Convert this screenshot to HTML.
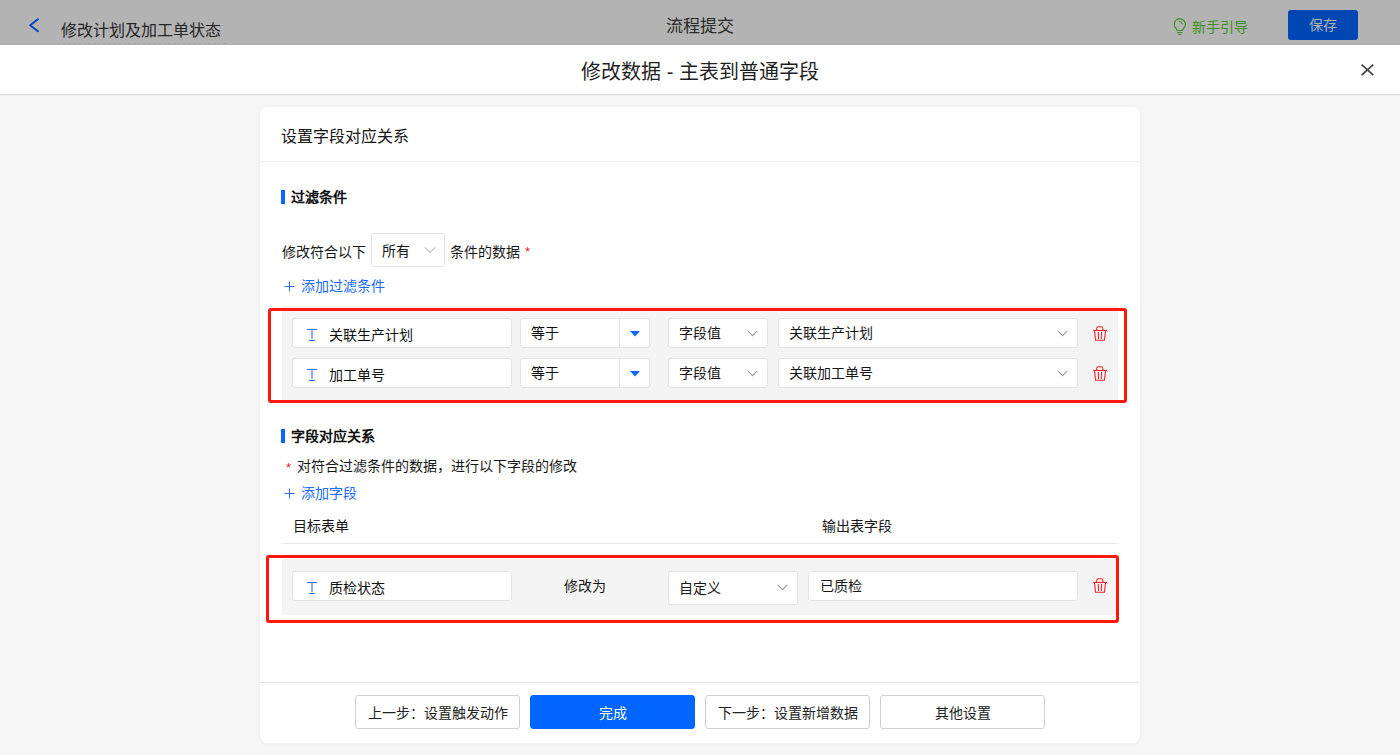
<!DOCTYPE html>
<html lang="zh-CN"><head><meta charset="utf-8">
<style>
*{box-sizing:border-box;margin:0;padding:0}
html,body{width:1400px;height:755px;overflow:hidden}
body{font-family:"Liberation Sans",sans-serif;background:#f5f5f5;position:relative;color:#333}
.a{position:absolute;white-space:nowrap}
.t14{font-size:14px;line-height:20px}
#topbar{left:0;top:0;width:1400px;height:45px;background:#b3b3b3;border-bottom:1px solid #aeaeae}
#mhead{left:0;top:45px;width:1400px;height:50px;background:#fff;border-bottom:1px solid #dedede;box-shadow:0 1px 0 #efefef}
#card{left:260px;top:107px;width:880px;height:636px;background:#fff;border-radius:8px;box-shadow:0 1px 4px rgba(0,0,0,0.035)}
.box{position:absolute;background:#fff;border:1px solid #e3e3e3;border-radius:3px}
.gray{position:absolute;background:#f4f4f4}
.red{position:absolute;border:3px solid #ff170a;border-radius:3px}
.blue{color:#1a6bff}
.bar{position:absolute;width:4px;height:14px;background:#0a66ff}
.btn{position:absolute;top:695px;height:34px;border:1px solid #d0d0d0;border-radius:3px;background:#fff;font-size:14px;line-height:34px;text-align:center;color:#222}
</style></head><body>
<div id="topbar" class="a"></div>
<!-- back arrow -->
<svg class="a" style="left:26px;top:15px" width="16" height="20" viewBox="0 0 16 20"><path d="M11.9 4.3 L4.2 10.3 L11.9 16.2" fill="none" stroke="#0046b8" stroke-width="2" stroke-linecap="round" stroke-linejoin="round"/></svg>
<div class="a" style="left:61px;top:20px;font-size:16px;line-height:22px;color:#262626">修改计划及加工单状态</div>
<div class="a" style="left:58px;top:43px;width:168px;border-top:1px dashed #a3a3a3"></div>
<div class="a" style="left:666px;top:16px;font-size:17px;line-height:22px;color:#2a2a2a">流程提交</div>
<!-- bulb -->
<svg class="a" style="left:1170px;top:16px" width="20" height="22" viewBox="0 0 20 22"><g fill="none" stroke="#3d9020" stroke-width="1.15" stroke-linecap="round"><path d="M7.1 14.5 L6 12.3 A5.6 5.6 0 1 1 13.6 12.3 L12.5 14.5 Z" stroke-linejoin="round"/><path d="M9.5 5.3 C10.7 5.6 11.7 6.5 12.3 7.9"/><path d="M7.6 16.5 H12 M8.6 18.5 H11"/></g></svg>
<div class="a t14" style="left:1192px;top:17px;color:#3d9020">新手引导</div>
<div class="a" style="left:1288px;top:10px;width:70px;height:30px;background:#0047b3;border-radius:3px;color:#b3b3b3;font-size:14px;line-height:30px;text-align:center">保存</div>

<div id="mhead" class="a"></div>
<div class="a" style="left:0;top:60px;width:1400px;text-align:center;font-size:20px;line-height:24px;color:#1f1f1f">修改数据 - 主表到普通字段</div>
<svg class="a" style="left:1358px;top:60px" width="19" height="19" viewBox="0 0 19 19"><path d="M3.6 4.6 L15.3 15.1 M15.3 4.6 L3.6 15.1" stroke="#404040" stroke-width="1.6"/></svg>

<div id="card" class="a"></div>
<div class="a" style="left:281px;top:126px;font-size:16px;line-height:22px;color:#161616">设置字段对应关系</div>
<div class="a" style="left:260px;top:161px;width:880px;height:1px;background:#ececec"></div>

<div class="bar" style="left:281px;top:190px"></div>
<div class="a t14" style="left:291px;top:187px;font-weight:bold;color:#0e0e0e">过滤条件</div>

<div class="a t14" style="left:282px;top:242px;color:#161616">修改符合以下</div>
<div class="box" style="left:371px;top:233px;width:74px;height:34px"></div>
<div class="a t14" style="left:382px;top:241px;color:#161616">所有</div>
<svg class="a" style="left:424px;top:246px" width="12" height="8" viewBox="0 0 12 8"><path d="M1 1.5 L6 6.5 L11 1.5" fill="none" stroke="#999" stroke-width="1"/></svg>
<div class="a t14" style="left:450px;top:242px;color:#161616">条件的数据</div>
<div class="a" style="left:525px;top:245px;font-size:13px;line-height:14px;color:#f5222d">*</div>

<svg class="a" style="left:284px;top:281px" width="11" height="11" viewBox="0 0 11 11"><path d="M5.5 0.5 V10.5 M0.5 5.5 H10.5" stroke="#2f6dff" stroke-width="1"/></svg>
<div class="a t14 blue" style="left:301px;top:276px">添加过滤条件</div>

<!-- filter rows -->
<div class="gray" style="left:282px;top:306px;width:836px;height:94px"></div>

<div class="box" style="left:292px;top:318px;width:220px;height:30px"></div>
<div class="a t14" style="left:329px;top:325px;color:#0e0e0e">关联生产计划</div>
<div class="box" style="left:520px;top:318px;width:130px;height:30px"></div>
<div class="a" style="left:619px;top:319px;width:1px;height:28px;background:#e3e3e3"></div>
<div class="a t14" style="left:531px;top:323px;color:#0e0e0e">等于</div>
<div class="box" style="left:668px;top:318px;width:100px;height:30px"></div>
<div class="a t14" style="left:679px;top:323px;color:#161616">字段值</div>
<div class="box" style="left:778px;top:318px;width:300px;height:30px"></div>
<div class="a t14" style="left:789px;top:323px;color:#161616">关联生产计划</div>

<div class="box" style="left:292px;top:358px;width:220px;height:30px"></div>
<div class="a t14" style="left:329px;top:365px;color:#0e0e0e">加工单号</div>
<div class="box" style="left:520px;top:358px;width:130px;height:30px"></div>
<div class="a" style="left:619px;top:359px;width:1px;height:28px;background:#e3e3e3"></div>
<div class="a t14" style="left:531px;top:363px;color:#0e0e0e">等于</div>
<div class="box" style="left:668px;top:358px;width:100px;height:30px"></div>
<div class="a t14" style="left:679px;top:363px;color:#161616">字段值</div>
<div class="box" style="left:778px;top:358px;width:300px;height:30px"></div>
<div class="a t14" style="left:789px;top:363px;color:#161616">关联加工单号</div>

<div class="red" style="left:268px;top:308px;width:859px;height:95px"></div>

<!-- section 2 -->
<div class="bar" style="left:281px;top:429px"></div>
<div class="a t14" style="left:291px;top:426px;font-weight:bold;color:#0e0e0e">字段对应关系</div>
<div class="a" style="left:286px;top:461px;font-size:13px;line-height:14px;color:#f5222d">*</div>
<div class="a t14" style="left:297px;top:456px;color:#161616">对符合过滤条件的数据，进行以下字段的修改</div>
<svg class="a" style="left:284px;top:488px" width="11" height="11" viewBox="0 0 11 11"><path d="M5.5 0.5 V10.5 M0.5 5.5 H10.5" stroke="#2f6dff" stroke-width="1"/></svg>
<div class="a t14 blue" style="left:301px;top:483px">添加字段</div>

<div class="a t14" style="left:293px;top:516px;color:#161616">目标表单</div>
<div class="a t14" style="left:822px;top:516px;color:#161616">输出表字段</div>
<div class="a" style="left:282px;top:543px;width:836px;height:1px;background:#e8e8e8"></div>

<div class="gray" style="left:282px;top:559px;width:836px;height:56px"></div>
<div class="box" style="left:292px;top:571px;width:220px;height:30px"></div>
<div class="a t14" style="left:329px;top:578px;color:#0e0e0e">质检状态</div>
<div class="a t14" style="left:564px;top:576px;color:#161616">修改为</div>
<div class="box" style="left:668px;top:571px;width:130px;height:34px"></div>
<div class="a t14" style="left:679px;top:578px;color:#161616">自定义</div>
<div class="box" style="left:808px;top:571px;width:270px;height:30px"></div>
<div class="a t14" style="left:820px;top:576px;color:#161616">已质检</div>

<svg class="a" style="left:306px;top:328px" width="12" height="14" viewBox="0 0 12 14"><path d="M1 1.5 H11 M6 2 V11 M3 12.5 H9" fill="none" stroke="#2e6bff" stroke-width="1.1"/></svg>
<svg class="a" style="left:630px;top:331px" width="10" height="6" viewBox="0 0 10 6"><path d="M0 0 H10 L5 5.5 Z" fill="#0a66ff"/></svg>
<svg class="a" style="left:747px;top:330px" width="11" height="7" viewBox="0 0 11 7"><path d="M0.8 0.8 L5.5 5.6 L10.2 0.8" fill="none" stroke="#9a9a9a" stroke-width="1.1"/></svg>
<svg class="a" style="left:1057px;top:330px" width="11" height="7" viewBox="0 0 11 7"><path d="M0.8 0.8 L5.5 5.6 L10.2 0.8" fill="none" stroke="#9a9a9a" stroke-width="1.1"/></svg>
<svg class="a" style="left:1093px;top:326px" width="16" height="17" viewBox="0 0 16 17"><g fill="none" stroke="#f5222d" stroke-width="1.1"><path d="M0.2 4.5 H14"/><path d="M3.8 4.5 V2.4 Q3.8 0.8 5.4 0.8 H8.3 Q9.9 0.8 9.9 2.4 V4.5"/><path d="M1.5 4.5 L2.6 14.3 H11.4 L12.6 4.5"/><path d="M5.3 6.2 L5.6 12.4 M8.6 6.2 L8.3 12.4" stroke-linecap="round"/></g></svg>
<svg class="a" style="left:306px;top:368px" width="12" height="14" viewBox="0 0 12 14"><path d="M1 1.5 H11 M6 2 V11 M3 12.5 H9" fill="none" stroke="#2e6bff" stroke-width="1.1"/></svg>
<svg class="a" style="left:630px;top:371px" width="10" height="6" viewBox="0 0 10 6"><path d="M0 0 H10 L5 5.5 Z" fill="#0a66ff"/></svg>
<svg class="a" style="left:747px;top:370px" width="11" height="7" viewBox="0 0 11 7"><path d="M0.8 0.8 L5.5 5.6 L10.2 0.8" fill="none" stroke="#9a9a9a" stroke-width="1.1"/></svg>
<svg class="a" style="left:1057px;top:370px" width="11" height="7" viewBox="0 0 11 7"><path d="M0.8 0.8 L5.5 5.6 L10.2 0.8" fill="none" stroke="#9a9a9a" stroke-width="1.1"/></svg>
<svg class="a" style="left:1093px;top:366px" width="16" height="17" viewBox="0 0 16 17"><g fill="none" stroke="#f5222d" stroke-width="1.1"><path d="M0.2 4.5 H14"/><path d="M3.8 4.5 V2.4 Q3.8 0.8 5.4 0.8 H8.3 Q9.9 0.8 9.9 2.4 V4.5"/><path d="M1.5 4.5 L2.6 14.3 H11.4 L12.6 4.5"/><path d="M5.3 6.2 L5.6 12.4 M8.6 6.2 L8.3 12.4" stroke-linecap="round"/></g></svg>
<svg class="a" style="left:306px;top:581px" width="12" height="14" viewBox="0 0 12 14"><path d="M1 1.5 H11 M6 2 V11 M3 12.5 H9" fill="none" stroke="#2e6bff" stroke-width="1.1"/></svg>
<svg class="a" style="left:777px;top:584px" width="11" height="7" viewBox="0 0 11 7"><path d="M0.8 0.8 L5.5 5.6 L10.2 0.8" fill="none" stroke="#9a9a9a" stroke-width="1.1"/></svg>
<svg class="a" style="left:1093px;top:578px" width="16" height="17" viewBox="0 0 16 17"><g fill="none" stroke="#f5222d" stroke-width="1.1"><path d="M0.2 4.5 H14"/><path d="M3.8 4.5 V2.4 Q3.8 0.8 5.4 0.8 H8.3 Q9.9 0.8 9.9 2.4 V4.5"/><path d="M1.5 4.5 L2.6 14.3 H11.4 L12.6 4.5"/><path d="M5.3 6.2 L5.6 12.4 M8.6 6.2 L8.3 12.4" stroke-linecap="round"/></g></svg>
<div class="red" style="left:266px;top:555px;width:853px;height:68px"></div>

<!-- footer -->
<div class="a" style="left:260px;top:682px;width:879px;height:1px;background:#e4e4e4"></div>
<div class="btn" style="left:355px;width:165px">上一步：设置触发动作</div>
<div class="btn" style="left:530px;width:165px;background:#0066ff;border-color:#0066ff;color:#fff">完成</div>
<div class="btn" style="left:705px;width:165px">下一步：设置新增数据</div>
<div class="btn" style="left:880px;width:165px">其他设置</div>
</body></html>
